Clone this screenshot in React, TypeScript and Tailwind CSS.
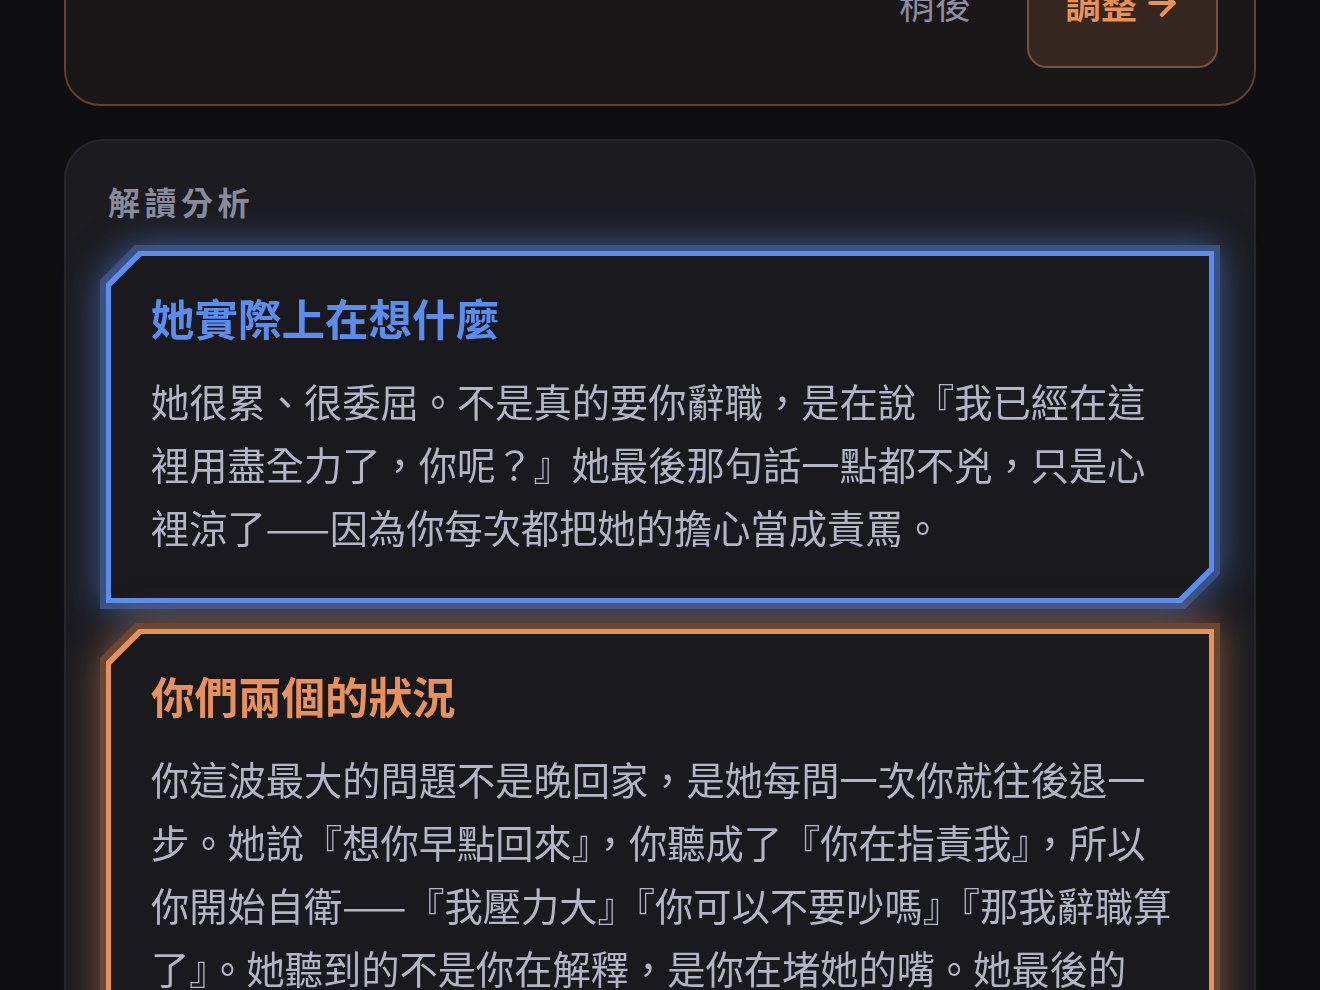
import React from "react";
import { ArrowRight } from "lucide-react";

const FONT = "font-['Noto_Sans_CJK_TC','Noto_Sans',sans-serif]";

type PanelProps = {
  title: string;
  body: string;
  tone: "blue" | "orange";
  className?: string;
};

function Panel({ title, body, tone, className = "" }: PanelProps) {
  const blue = tone === "blue";
  return (
    <div
      className={
        (blue
          ? "[filter:drop-shadow(0_0_18px_rgba(91,141,239,0.55))] "
          : "[filter:drop-shadow(0_0_18px_rgba(232,145,90,0.5))] ") + className
      }
    >
      <div
        className={
          (blue ? "bg-[#3a5283] " : "bg-[#6b4632] ") +
          "p-[6px] [clip-path:polygon(35px_0,100%_0,100%_calc(100%_-_35px),calc(100%_-_35px)_100%,0_100%,0_35px)]"
        }
      >
        <div
          className={
            (blue ? "bg-[#5b8def] " : "bg-[#e8915a] ") +
            "p-[5px] [clip-path:polygon(32.5px_0,100%_0,100%_calc(100%_-_32.5px),calc(100%_-_32.5px)_100%,0_100%,0_32.5px)]"
          }
        >
          <div className="bg-[#19191e] pl-[40px] pr-[32px] pt-[34px] pb-[40px] [clip-path:polygon(30.5px_0,100%_0,100%_calc(100%_-_30.5px),calc(100%_-_30.5px)_100%,0_100%,0_30.5px)]">
            <h3
              className={
                (blue ? "text-[#5b8def] " : "text-[#e8915a] ") +
                "text-[43.5px] leading-[56px] font-bold"
              }
            >
              {title}
            </h3>
            <p className="mt-[23px] text-[38.25px] leading-[63px] text-[#b4b4c6]">{body}</p>
          </div>
        </div>
      </div>
    </div>
  );
}

export default function App() {
  return (
    <div className={"min-h-screen bg-[#0f0f12] px-[64px] overflow-hidden " + FONT}>
      {/* top card (scrolled, partially visible) */}
      <div className="-mt-[100px] rounded-[36px] border-2 border-[#5e412f] bg-[#1a1718] pt-[36px] pb-[36px] pr-[36px]">
        <div className="flex items-center justify-end gap-[56px]">
          <span className="text-[36px] leading-[48px] text-[#8e8ea2]">稍後</span>
          <button className="flex h-[130px] items-center gap-[5px] rounded-[20px] border-2 border-[#7a5038] bg-[#362620] pl-[36px] pr-[34px] text-[36px] leading-[48px] font-bold text-[#e8915a]">
            <span>調整</span>
            <ArrowRight size={40} strokeWidth={2.5} />
          </button>
        </div>
      </div>

      {/* analysis card */}
      <div className="mt-[33px] rounded-[40px] border-2 border-[#26262c] bg-[#1b1b20] px-[34px] pt-[40px] pb-[60px]">
        <div className="ml-[8px] text-[32px] leading-[40px] font-semibold tracking-[4.5px] text-[#8a8a9c]">
          解讀分析
        </div>
        <Panel
          className="mt-[24px]"
          tone="blue"
          title="她實際上在想什麼"
          body="她很累、很委屈。不是真的要你辭職，是在說『我已經在這裡用盡全力了，你呢？』她最後那句話一點都不兇，只是心裡涼了——因為你每次都把她的擔心當成責罵。"
        />
        <Panel
          className="mt-[14px]"
          tone="orange"
          title="你們兩個的狀況"
          body="你這波最大的問題不是晚回家，是她每問一次你就往後退一步。她說『想你早點回來』，你聽成了『你在指責我』，所以你開始自衛——『我壓力大』『你可以不要吵嗎』『那我辭職算了』。她聽到的不是你在解釋，是你在堵她的嘴。她最後的『你呢？』其實是在等你走過去，而不是等你講道理。"
        />
      </div>
    </div>
  );
}
